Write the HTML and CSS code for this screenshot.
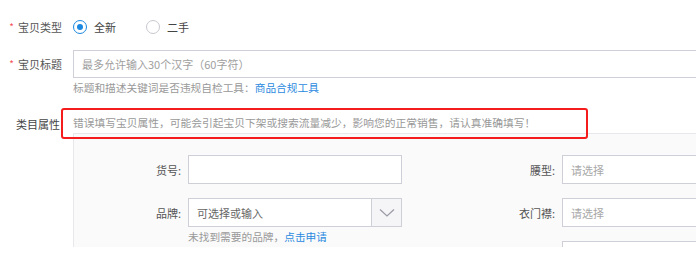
FILE: index.html
```html
<!DOCTYPE html>
<html lang="zh-CN">
<head>
<meta charset="utf-8">
<link rel="stylesheet" href="styles.css">
</head>
<body>
<div class="form">
  <div class="row row-type">
    <div class="lbl"><span class="req">*</span>宝贝类型</div>
    <div class="radios">
      <label class="radio"><span class="dot on"></span>全新</label>
      <label class="radio"><span class="dot"></span>二手</label>
    </div>
  </div>
  <div class="row row-title">
    <div class="lbl"><span class="req">*</span>宝贝标题</div>
    <div class="ctrl">
      <div class="text-input wide"><span class="ph">最多允许输入30个汉字（60字符）</span></div>
    </div>
  </div>
  <div class="help help-title">标题和描述关键词是否违规自检工具：<a class="link">商品合规工具</a></div>
  <div class="row row-attr">
    <div class="lbl lbl-attr">类目属性</div>
    <div class="attr-body">
      <div class="warn">错误填写宝贝属性，可能会引起宝贝下架或搜索流量减少，影响您的正常销售，请认真准确填写！</div>
      <div class="panel">
        <div class="col col-left">
          <div class="field">
            <div class="flabel">货号:</div>
            <div class="box box-left"></div>
          </div>
          <div class="field-wrap">
            <div class="field">
              <div class="flabel">品牌:</div>
              <div class="box box-left select">
                <span class="val">可选择或输入</span>
                <span class="arrow"><svg width="16" height="10" viewBox="0 0 16 10"><path d="M1 1.5 L8 8 L15 1.5" fill="none" stroke="#9a9aa6" stroke-width="1.2"/></svg></span>
              </div>
            </div>
            <div class="help help-brand">未找到需要的品牌，<a class="link">点击申请</a></div>
          </div>
        </div>
        <div class="col col-right">
          <div class="field">
            <div class="flabel flabel-r">腰型:</div>
            <div class="box box-right"><span class="ph2">请选择</span></div>
          </div>
          <div class="field">
            <div class="flabel flabel-r">衣门襟:</div>
            <div class="box box-right"><span class="ph2">请选择</span></div>
          </div>
          <div class="field">
            <div class="flabel flabel-r"></div>
            <div class="box box-right"></div>
          </div>
        </div>
      </div>
    </div>
  </div>
  <div class="mark"></div>
</div>
</body>
</html>
```
FILE: styles.css
```css
* { box-sizing: border-box; }
html, body { margin: 0; padding: 0; background: #fff; }
body {
  font-family: "Noto Sans CJK SC", "Noto Sans", "Liberation Sans", sans-serif;
  font-size: 11px;
  color: #555;
  width: 696px;
  height: 265px;
  overflow: hidden;
}
.form { position: relative; padding-top: 13px; }
.row { display: flex; align-items: center; }
.lbl {
  width: 73px;
  padding-right: 11px;
  text-align: right;
  color: #555;
  flex: none;
  line-height: 16px;
}
.req { color: #f5535c; margin-right: 4px; font-size: 10px; position: relative; top: -1px; }
.row-type { height: 28px; }
.radios { display: flex; align-items: center; }
.radio { display: flex; align-items: center; color: #444; margin-right: 30px; line-height: 16px; }
.dot {
  width: 14px; height: 14px; border-radius: 50%;
  border: 1px solid #c8c8d0; background: #fff;
  margin-right: 7px; position: relative; flex: none;
}
.dot.on { border-color: #1a87e0; }
.dot.on::after {
  content: ""; position: absolute; left: 3px; top: 3px;
  width: 6px; height: 6px; border-radius: 50%; background: #1a87e0;
}
.row-title { margin-top: 9px; }
.ctrl { flex: 1; }
.text-input {
  height: 28px; border: 1px solid #cfcfd8; background: #fff;
  display: flex; align-items: center; padding-left: 8px;
}
.text-input.wide { width: 640px; }
.ph { color: #a0a0a0; }
.help { color: #999; line-height: 16px; font-size: 10.7px; }
.help-title { margin-top: 2px; margin-left: 73px; }
.link { color: #2b8ae0; text-decoration: none; }
.row-attr { margin-top: 19px; align-items: flex-start; }
.lbl-attr { padding-top: 1px; padding-right: 13px; color: #444; }
.attr-body { flex: 1; }
.warn { line-height: 16px; color: #999; font-size: 10.75px; }
.panel {
  margin-top: 2px;
  height: 114px;
  overflow: hidden;
  background: #fafafa;
  border-top: 1px solid #e8e8ec;
  border-left: 1px solid #e8e8ec;
  display: flex;
  padding-top: 21px;
  width: 640px;
}
.col { display: flex; flex-direction: column; gap: 14px; flex: none; }
.field { display: flex; align-items: center; }
.flabel { width: 107px; margin-right: 7px; text-align: right; color: #555; flex: none; }
.flabel-r { width: 153px; }
.box { height: 29px; border: 1px solid #cfcfd8; background: #fff; flex: none; display: flex; align-items: center; }
.box-left { width: 214px; }
.box-right { width: 200px; padding-left: 8px; }
.ph2 { color: #a8a8a8; }
.select { padding-left: 8px; }
.select .val { flex: 1; color: #666; }
.arrow {
  width: 30px; height: 100%; border-left: 1px solid #cfcfd8; background: #f5f5f7;
  display: flex; align-items: center; justify-content: center;
}
.help-brand { margin-left: 114px; margin-top: 2px; }
.mark {
  position: absolute;
  left: 61px; top: 108px;
  width: 527px; height: 31px;
  border: 2px solid #f41c1c;
  border-radius: 3px;
}
```
